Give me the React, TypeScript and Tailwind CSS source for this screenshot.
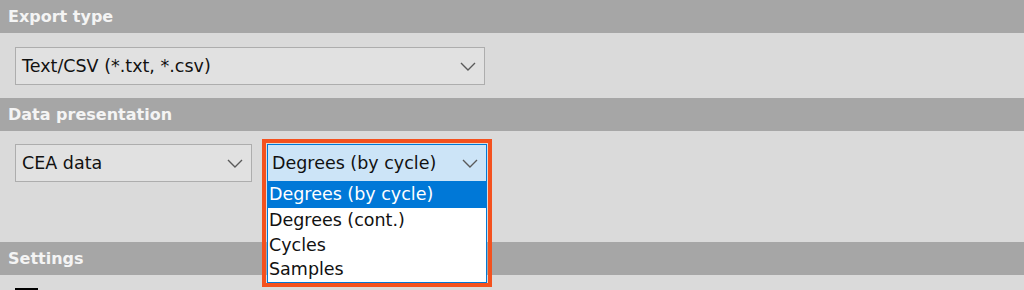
const FONT = { fontFamily: '"DejaVu Sans", Verdana, sans-serif' };

function Chevron() {
  return (
    <svg width="16" height="9" viewBox="0 0 16 9" fill="none" className="shrink-0 text-[#5a5a5a]">
      <polyline points="1,1 8,8 15,1" stroke="currentColor" strokeWidth="1.4" />
    </svg>
  );
}

function SectionHeader({ title }: { title: string }) {
  return (
    <div className="flex h-[33px] items-center bg-[#a6a6a6] px-2 text-[16px] font-bold text-[#f4f4f4]">
      {title}
    </div>
  );
}

function Combo({ value, width }: { value: string; width: string }) {
  return (
    <div
      className={`flex h-[38px] items-center justify-between border border-[#adadad] bg-[#e1e1e1] pl-[6px] pr-[8px] text-[17.5px] text-[#111] ${width}`}
    >
      <span>{value}</span>
      <Chevron />
    </div>
  );
}

const OPTIONS = ["Degrees (by cycle)", "Degrees (cont.)", "Cycles", "Samples"];

export default function App() {
  return (
    <div className="h-[290px] w-[1024px] overflow-hidden bg-[#dadada]" style={FONT}>
      <SectionHeader title="Export type" />
      <div className="px-[15px] pb-[13px] pt-[14px]">
        <Combo value="Text/CSV (*.txt, *.csv)" width="w-[470px]" />
      </div>

      <SectionHeader title="Data presentation" />
      <div className="flex h-[111px] gap-[15px] px-[15px] pt-[13px]">
        <Combo value="CEA data" width="w-[237px]" />
        <div className="relative z-10 w-[220px]">
          <div className="flex h-[38px] items-center justify-between border border-[#0078d7] bg-[#cce4f7] pl-[4px] pr-[8px] text-[17.5px] text-[#111]">
            <span>Degrees (by cycle)</span>
            <Chevron />
          </div>
          <div className="border border-t-0 border-[#0078d7] bg-white text-[17.5px] leading-[24.5px] text-[#111]">
            {OPTIONS.map((o, i) => (
              <div
                key={o}
                className={`pl-[1px] ${i === 0 ? "h-[26px] bg-[#0078d7] text-white" : "h-[24.5px]"}`}
              >
                {o}
              </div>
            ))}
          </div>
          {/* highlight frame drawn over the open dropdown */}
          <div className="pointer-events-none absolute -left-[5px] -right-[5px] -top-[5px] h-[148px] border-[4px] border-[#f4511e]" />
        </div>
      </div>

      <SectionHeader title="Settings" />
      <div className="px-[15px] pt-[13px]">
        <div className="h-[23px] w-[23px] border-2 border-black bg-white" />
      </div>
    </div>
  );
}
